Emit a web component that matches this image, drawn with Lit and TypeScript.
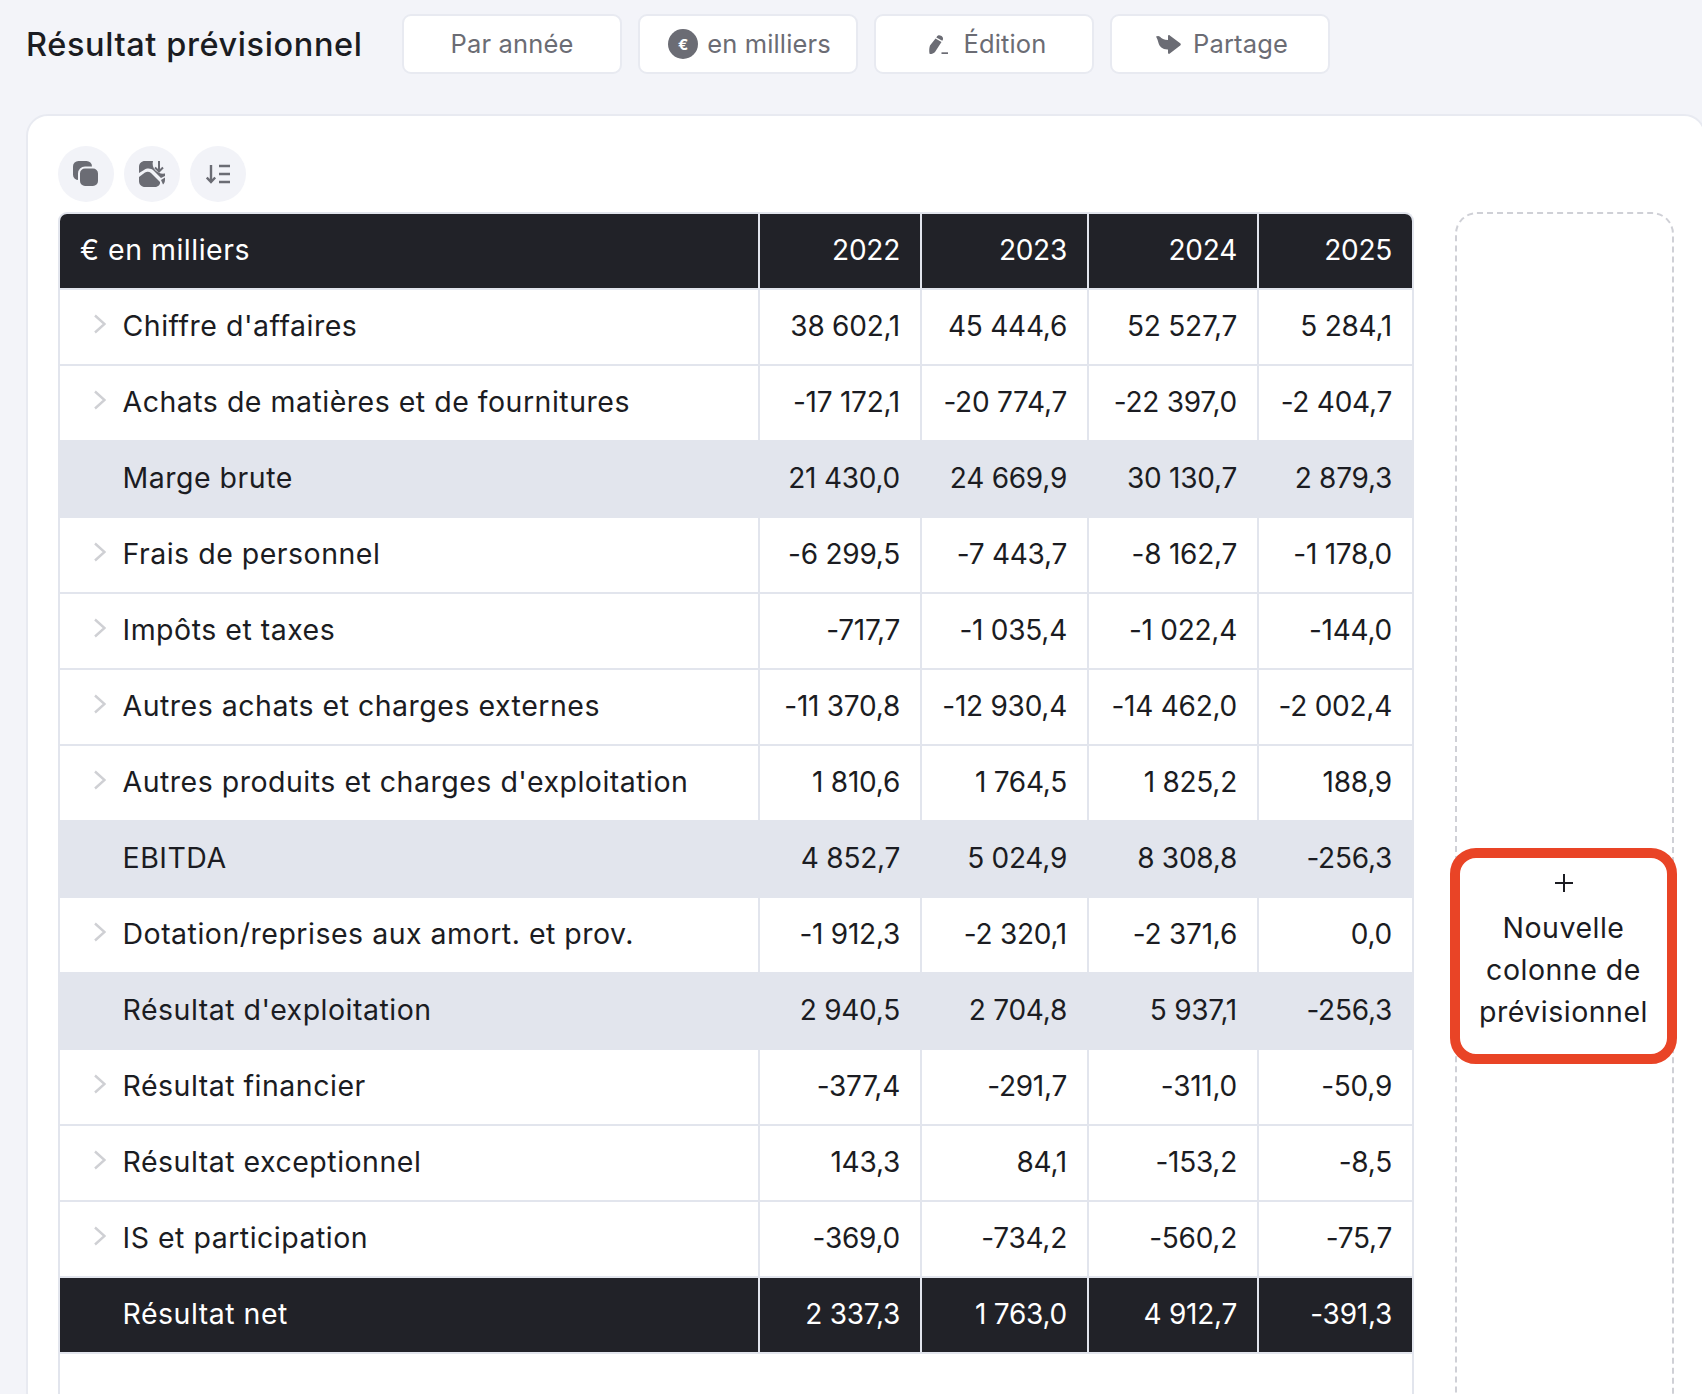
import { LitElement, css, html, svg } from 'lit'
import { customElement } from 'lit/decorators.js'

type Kind = 'line' | 'sub' | 'total'

interface Row {
  label: string
  kind: Kind
  values: string[]
}

const rows: Row[] = [
  { label: "Chiffre d'affaires", kind: 'line', values: ['38 602,1', '45 444,6', '52 527,7', '5 284,1'] },
  { label: 'Achats de matières et de fournitures', kind: 'line', values: ['-17 172,1', '-20 774,7', '-22 397,0', '-2 404,7'] },
  { label: 'Marge brute', kind: 'sub', values: ['21 430,0', '24 669,9', '30 130,7', '2 879,3'] },
  { label: 'Frais de personnel', kind: 'line', values: ['-6 299,5', '-7 443,7', '-8 162,7', '-1 178,0'] },
  { label: 'Impôts et taxes', kind: 'line', values: ['-717,7', '-1 035,4', '-1 022,4', '-144,0'] },
  { label: 'Autres achats et charges externes', kind: 'line', values: ['-11 370,8', '-12 930,4', '-14 462,0', '-2 002,4'] },
  { label: "Autres produits et charges d'exploitation", kind: 'line', values: ['1 810,6', '1 764,5', '1 825,2', '188,9'] },
  { label: 'EBITDA', kind: 'sub', values: ['4 852,7', '5 024,9', '8 308,8', '-256,3'] },
  { label: 'Dotation/reprises aux amort. et prov.', kind: 'line', values: ['-1 912,3', '-2 320,1', '-2 371,6', '0,0'] },
  { label: "Résultat d'exploitation", kind: 'sub', values: ['2 940,5', '2 704,8', '5 937,1', '-256,3'] },
  { label: 'Résultat financier', kind: 'line', values: ['-377,4', '-291,7', '-311,0', '-50,9'] },
  { label: 'Résultat exceptionnel', kind: 'line', values: ['143,3', '84,1', '-153,2', '-8,5'] },
  { label: 'IS et participation', kind: 'line', values: ['-369,0', '-734,2', '-560,2', '-75,7'] },
  { label: 'Résultat net', kind: 'total', values: ['2 337,3', '1 763,0', '4 912,7', '-391,3'] },
]

const years = ['2022', '2023', '2024', '2025']

const pencilIcon = svg`<svg class="pen-ic" width="19" height="19" viewBox="0 0 19 19" fill="#6b6c74">
  <path d="M1 10.500L6.500 3.500l6 3.500L6 17c-1.500 1.500-4.500 2.500-5.200 2C0 18.500 0 13 1 10.500z"/>
  <path d="M7.800 1.800C8.500.3 10.200-.2 12 .8c1.800 1 2.500 2.700 1.700 4.200l-.4.8-6-3.300z"/>
  <rect x="12.500" y="17.300" width="6.500" height="1.700"/>
</svg>`

const shareIcon = svg`<svg class="share-ic" width="25" height="19" viewBox="0 0 25 19" fill="#6b6c74">
  <path d="M0 1.500C1.500.8 3 .8 4 1.800 5.500 3.500 8 5 12 5V1.200c0-1 1-1.400 1.800-.8l10.400 7.900c.8.600.8 1.700 0 2.300L13.800 18.600c-.8.600-1.800.2-1.800-.8v-3.300c-5.500.2-8.500-3-9.500-6.500C2 6 1.300 3.700 0 1.500z"/>
</svg>`

const copyIcon = svg`<svg width="26" height="26" viewBox="0 0 26 26">
  <rect x="0" y="0" width="19" height="19" rx="5.500" fill="#6b6c74"/>
  <rect x="6" y="6.500" width="20" height="19.500" rx="6" fill="#6b6c74" stroke="#f2f3f8" stroke-width="2"/>
</svg>`

const imageIcon = svg`<svg width="26" height="26" viewBox="0 0 26 26" fill="#6b6c74">
  <path d="M0 6C0 2.500 2.500 0 6 0h8c-1 3 0 7 2.500 9.500 2.500 2.500 5.500 3.500 9.500 3V15l-4 2-7-7c-3-3-7-3-10-1l-5 3z"/>
  <path d="M0 16l6-4.500c2-1 4-1 6 .5l9 9c.5 2.500-2 5-5 5H6c-3.500 0-6-2.500-6-6z"/>
  <path d="M22 19l4-2.500V19c0 2-1 3.500-2 4.500z"/>
  <path d="M20 0v10M16 6.500l4 4 4-4" fill="none" stroke="#6b6c74" stroke-width="2"/>
</svg>`

const sortIcon = svg`<svg width="24" height="20" viewBox="0 0 24 20" fill="none" stroke="#6b6c74" stroke-width="2.400">
  <path d="M5 1v17M.8 13.500L5 18l4.200-4.500"/>
  <path d="M13 2h11M13 10h11M13 18h11"/>
</svg>`

const chevron = svg`<svg class="chev" width="12" height="20" viewBox="0 0 12 20" fill="none" stroke="#cfd0d4" stroke-width="2.400">
  <path d="M1 1.500L10.500 10 1 18.500"/>
</svg>`

@customElement('app-root')
export class AppRoot extends LitElement {
  static styles = css`
    :host {
      display: block;
      width: 1702px;
      height: 1394px;
      overflow: hidden;
      background: #f3f4f9;
      font-family: Inter, 'Liberation Sans', sans-serif;
      color: #1b1c22;
    }

    .top {
      display: flex;
      align-items: center;
      padding: 14px 0 0 26px;
      height: 60px;
    }

    h1 {
      margin: 0;
      width: 376px;
      font-size: 32.500px;
      font-weight: 500;
      letter-spacing: 0.6px;
      white-space: nowrap;
    }

    .btns {
      display: flex;
      gap: 16px;
    }

    .btn {
      box-sizing: border-box;
      display: flex;
      align-items: center;
      justify-content: center;
      gap: 12px;
      width: 220px;
      height: 60px;
      padding-bottom: 2px;
      background: #fff;
      border: 2px solid #e8eaf1;
      border-radius: 9px;
      color: #6b6c74;
      font-size: 25.500px;
      letter-spacing: 0.15px;
    }

    .btn svg,
    .euro {
      flex: none;
      margin-top: 2px;
    }

    .pen-ic {
      margin-left: 8px;
    }

    .pen {
      margin-left: 3px;
    }

    .share-ic {
      margin-left: 4px;
    }

    .euro {
      display: flex;
      align-items: center;
      justify-content: center;
      width: 30px;
      height: 30px;
      margin: 2px -3px 0 3px;
      border-radius: 50%;
      background: #6b6c74;
      color: #fff;
      font-size: 15px;
      font-weight: 700;
    }

    .card {
      box-sizing: border-box;
      display: flex;
      flex-direction: column;
      gap: 10px;
      margin: 40px 0 0 26px;
      width: 1680px;
      height: 1300px;
      padding: 30px 0 0 30px;
      background: #fff;
      border: 2px solid #e8eaf1;
      border-radius: 22px;
    }

    .tools {
      display: flex;
      gap: 10px;
    }

    .tool {
      display: flex;
      align-items: center;
      justify-content: center;
      width: 56px;
      height: 56px;
      border-radius: 50%;
      background: #f2f3f8;
    }

    .body {
      display: flex;
      gap: 41px;
      align-items: stretch;
      flex: 1;
    }

    .table {
      box-sizing: border-box;
      width: 1356px;
      border: 2px solid #e2e5ed;
      border-bottom: 0;
      border-radius: 9px 9px 0 0;
      overflow: hidden;
      font-size: 28px;
    }

    .row {
      display: grid;
      grid-template-columns: 700px 162px 167px 170px 153px;
      height: 76px;
    }

    .cell {
      box-sizing: border-box;
      display: flex;
      align-items: center;
      justify-content: flex-end;
      padding: 0 20px 2px 0;
      border-right: 2px solid #e2e5ed;
      border-bottom: 2px solid #e2e5ed;
      white-space: nowrap;
      letter-spacing: -0.25px;
    }

    .cell:last-child {
      border-right: 0;
    }

    .name {
      justify-content: flex-start;
      padding: 0 0 4px 62.500px;
      position: relative;
      font-size: 28.500px;
      letter-spacing: 0.5px;
    }

    .chev {
      position: absolute;
      left: 34px;
      top: 24px;
    }

    .head .name {
      padding-left: 20px;
    }

    .head,
    .total {
      background: #212228;
      color: #fff;
    }

    .sub {
      background: #e2e5ed;
    }

    .add-col {
      box-sizing: border-box;
      display: flex;
      flex-direction: column;
      align-items: center;
      width: 219px;
      border: 2px dashed #cfd0d6;
      border-radius: 22px;
      padding-top: 634px;
      margin-bottom: -30px;
    }

    .add {
      box-sizing: border-box;
      flex: none;
      display: flex;
      flex-direction: column;
      align-items: center;
      justify-content: center;
      width: 227px;
      height: 216px;
      margin-left: -2px;
      padding-bottom: 6px;
      background: #fff;
      border: 10px solid #e94426;
      border-radius: 26px;
      font-size: 28.500px;
      letter-spacing: 0.5px;
      line-height: 42px;
      text-align: center;
    }

    .plus {
      margin-bottom: 15px;
    }
  `

  private renderRow(row: Row) {
    return html`
      <div class="row ${row.kind}">
        <div class="cell name">${row.kind === 'line' ? chevron : ''}${row.label}</div>
        ${row.values.map((v) => html`<div class="cell">${v}</div>`)}
      </div>
    `
  }

  render() {
    return html`
      <div class="top">
        <h1>Résultat prévisionnel</h1>
        <div class="btns">
          <div class="btn">Par année</div>
          <div class="btn"><span class="euro">€</span>en milliers</div>
          <div class="btn">${pencilIcon}<span class="pen">Édition</span></div>
          <div class="btn">${shareIcon}Partage</div>
        </div>
      </div>
      <div class="card">
        <div class="tools">
          <div class="tool">${copyIcon}</div>
          <div class="tool">${imageIcon}</div>
          <div class="tool">${sortIcon}</div>
        </div>
        <div class="body">
          <div class="table">
            <div class="row head">
              <div class="cell name">€ en milliers</div>
              ${years.map((y) => html`<div class="cell">${y}</div>`)}
            </div>
            ${rows.map((r) => this.renderRow(r))}
          </div>
          <div class="add-col">
            <div class="add">
              <svg class="plus" width="18" height="18" viewBox="0 0 18 18" stroke="#1b1c22" stroke-width="2"><path d="M9 0v18M0 9h18"/></svg>
              <span>Nouvelle<br />colonne de<br />prévisionnel</span>
            </div>
          </div>
        </div>
      </div>
    `
  }
}
